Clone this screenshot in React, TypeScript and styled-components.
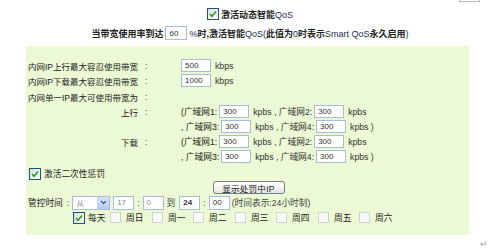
import React from "react";
import styled, { createGlobalStyle } from "styled-components";

const Global = createGlobalStyle`
  html, body { margin: 0; padding: 0; background: #fff; }
  body {
    font-family: "Liberation Sans", "Noto Sans CJK SC", sans-serif;
    font-size: 8.7px;
    color: #222;
  }
  * { box-sizing: border-box; }
`;

const Page = styled.div`
  width: 500px;
  height: 252px;
  display: flex;
  flex-direction: column;
  overflow: hidden;
`;

const TopStub = styled.div`
  margin-left: 459px;
  width: 21px;
  height: 2px;
  border: 1px solid #b8b8b8;
  border-top: none;
`;

const HeadLine = styled.div<{ $top: number }>`
  margin-top: ${(p) => p.$top}px;
  height: 14px;
  display: flex;
  align-items: center;
  justify-content: center;
  gap: 2px;
  font-size: 9px;
  font-weight: bold;
  white-space: nowrap;
`;

const Latin = styled.span`
  font-weight: normal;
  color: #1e2c52;
`;

const Panel = styled.div`
  margin: 6px 0 0 26px;
  width: 443px;
  height: 189px;
  background: #ebf9d4;
  padding: 12px 0 0 2px;
  display: flex;
  flex-direction: column;
`;

const Grid = styled.div`
  display: grid;
  grid-template-columns: 117px 36px 1fr;
  grid-auto-rows: 15px;
  align-items: center;
  white-space: nowrap;
`;

const Label = styled.span<{ $right?: boolean }>`
  justify-self: ${(p) => (p.$right ? "end" : "start")};
  padding-right: ${(p) => (p.$right ? "7px" : "0")};
  font-size: 8.5px;
`;

const Colon = styled.span`
  color: #444;
`;

const Value = styled.span`
  display: flex;
  align-items: center;
  gap: 2px;
`;

const Spacer = styled.div<{ $h: number }>`
  height: ${(p) => p.$h}px;
`;

const TextInput = styled.span<{ $w: number; $h?: number; $bold?: boolean; $faint?: boolean }>`
  display: inline-flex;
  align-items: center;
  width: ${(p) => p.$w}px;
  height: ${(p) => p.$h ?? 13}px;
  background: #fff;
  border: 1px solid #a9bcd6;
  padding-left: 3px;
  font-size: 8px;
  font-weight: ${(p) => (p.$bold ? "bold" : "normal")};
  color: ${(p) => (p.$faint ? "#7c8aa0" : "#333")};
  flex: none;
`;

const Unit = styled.span`
  margin-left: 2px;
  color: #333;
`;

const CheckRow = styled.div`
  margin-top: 2px;
  height: 15px;
  display: flex;
  align-items: center;
  gap: 3px;
  padding-left: 1px;
`;

const Box = styled.span<{ $checked?: boolean }>`
  display: inline-flex;
  align-items: center;
  justify-content: center;
  width: ${(p) => (p.$checked ? 12 : 11)}px;
  height: ${(p) => (p.$checked ? 12 : 11)}px;
  flex: none;
  border: 1px solid ${(p) => (p.$checked ? "#1c5180" : "#d2d2d2")};
  background: ${(p) =>
    p.$checked ? "linear-gradient(135deg, #dcdcd7, #ffffff)" : "#f9f9f9"};
`;

const ButtonRow = styled.div`
  height: 13px;
  display: flex;
  justify-content: center;
`;

const Button = styled.span`
  width: 72px;
  height: 13px;
  display: inline-flex;
  align-items: center;
  justify-content: center;
  border: 1px solid #6f7d8c;
  border-radius: 3px;
  background: linear-gradient(#ffffff, #e6e6e0);
  font-size: 8.5px;
  letter-spacing: 0.3px;
  color: #222;
`;

const TimeRow = styled.div`
  margin-top: 1px;
  height: 15px;
  display: flex;
  align-items: center;
  white-space: nowrap;
`;

const Sep = styled.span<{ $l: number; $r: number }>`
  margin: 0 ${(p) => p.$r}px 0 ${(p) => p.$l}px;
  color: #444;
`;

const Select = styled.span`
  width: 38px;
  height: 14px;
  display: inline-flex;
  align-items: stretch;
  border: 1px solid #a9bcd6;
  background: #fff;
  flex: none;
`;

const SelectText = styled.span`
  flex: 1;
  padding-left: 3px;
  display: flex;
  align-items: center;
  color: #8a96aa;
  font-size: 8px;
`;

const SelectArrow = styled.span`
  width: 12px;
  display: flex;
  align-items: center;
  justify-content: center;
  background: linear-gradient(#dbe6fb, #b6cbf2);
  border-left: 1px solid #c4d3ef;
`;

const DaysRow = styled.div`
  height: 15px;
  display: flex;
  align-items: center;
  padding-left: 45px;
  white-space: nowrap;
`;

const Day = styled.span<{ $w: number; $gap: number }>`
  width: ${(p) => p.$w}px;
  display: flex;
  align-items: center;
  gap: ${(p) => p.$gap}px;
  flex: none;
`;

const Footer = styled.div`
  margin-top: 4px;
  height: 10px;
  display: flex;
  justify-content: flex-end;
  padding-right: 12px;
  color: #9a9a9a;
  font-size: 9px;
  line-height: 10px;
`;

const Check = () => (
  <svg width="8" height="8" viewBox="0 0 8 8">
    <path d="M1 4 L3 6.2 L7 1.5" stroke="#21a121" strokeWidth="1.6" fill="none" />
  </svg>
);

const Chevron = () => (
  <svg width="7" height="5" viewBox="0 0 7 5">
    <path d="M1 1 L3.5 3.5 L6 1" stroke="#4d6185" strokeWidth="1.3" fill="none" />
  </svg>
);

const WanLine: React.FC<{ a: string; b: string; lead: string; close?: boolean }> = ({
  a,
  b,
  lead,
  close,
}) => (
  <Value>
    <span>{lead}广域网{a}:</span>
    <TextInput $w={30}>300</TextInput>
    <Unit>kpbs , 广域网{b}:</Unit>
    <TextInput $w={30}>300</TextInput>
    <Unit>{close ? "kpbs )" : "kpbs"}</Unit>
  </Value>
);

const days = ["周日", "周一", "周二", "周三", "周四", "周五", "周六"];

export default function App() {
  return (
    <Page>
      <Global />
      <TopStub />
      <HeadLine $top={5}>
        <Box $checked>
          <Check />
        </Box>
        <span>
          激活动态智能<Latin>QoS</Latin>
        </span>
      </HeadLine>
      <HeadLine $top={5}>
        <span>当带宽使用率到达</span>
        <TextInput $w={22} $h={14}>60</TextInput>
        <span>
          <Latin>%</Latin>时,激活智能<Latin>QoS(</Latin>此值为<Latin>0</Latin>时表示
          <Latin>Smart QoS</Latin>永久启用<Latin>)</Latin>
        </span>
      </HeadLine>
      <Panel>
        <Grid>
          <Label>内网IP上行最大容忍使用带宽</Label>
          <Colon>:</Colon>
          <Value>
            <TextInput $w={30}>500</TextInput>
            <Unit>kbps</Unit>
          </Value>
          <Label>内网IP下载最大容忍使用带宽</Label>
          <Colon>:</Colon>
          <Value>
            <TextInput $w={30}>1000</TextInput>
            <Unit>kbps</Unit>
          </Value>
        </Grid>
        <Spacer $h={1} />
        <Grid>
          <Label>内网单一IP最大可使用带宽为</Label>
          <Colon>:</Colon>
          <Value />
          <Label $right>上行</Label>
          <Colon>:</Colon>
          <WanLine lead="(" a="1" b="2" />
          <span />
          <span />
          <WanLine lead=", " a="3" b="4" close />
          <Label $right>下载</Label>
          <Colon>:</Colon>
          <WanLine lead="(" a="1" b="2" />
          <span />
          <span />
          <WanLine lead=", " a="3" b="4" close />
        </Grid>
        <CheckRow>
          <Box $checked>
            <Check />
          </Box>
          <span>激活二次性惩罚</span>
        </CheckRow>
        <ButtonRow>
          <Button>显示处罚中IP</Button>
        </ButtonRow>
        <TimeRow>
          <span>管控时间</span>
          <Sep $l={4} $r={3}>:</Sep>
          <Select>
            <SelectText>从</SelectText>
            <SelectArrow>
              <Chevron />
            </SelectArrow>
          </Select>
          <Sep $l={3} $r={0} />
          <TextInput $w={21} $h={14} $faint>17</TextInput>
          <Sep $l={3} $r={3}>:</Sep>
          <TextInput $w={21} $h={14} $faint>0</TextInput>
          <Sep $l={3} $r={4}>到</Sep>
          <TextInput $w={21} $h={14} $bold>24</TextInput>
          <Sep $l={3} $r={3}>:</Sep>
          <TextInput $w={21} $h={14}>00</TextInput>
          <Sep $l={2} $r={0}>(时间表示:24小时制)</Sep>
        </TimeRow>
        <DaysRow>
          <Day $w={37} $gap={3}>
            <Box $checked>
              <Check />
            </Box>
            <span>每天</span>
          </Day>
          {days.map((d, i) => (
            <Day key={d} $w={i % 2 === 0 ? 42 : 41} $gap={5}>
              <Box />
              <span>{d}</span>
            </Day>
          ))}
        </DaysRow>
      </Panel>
      <Footer>↵</Footer>
    </Page>
  );
}
